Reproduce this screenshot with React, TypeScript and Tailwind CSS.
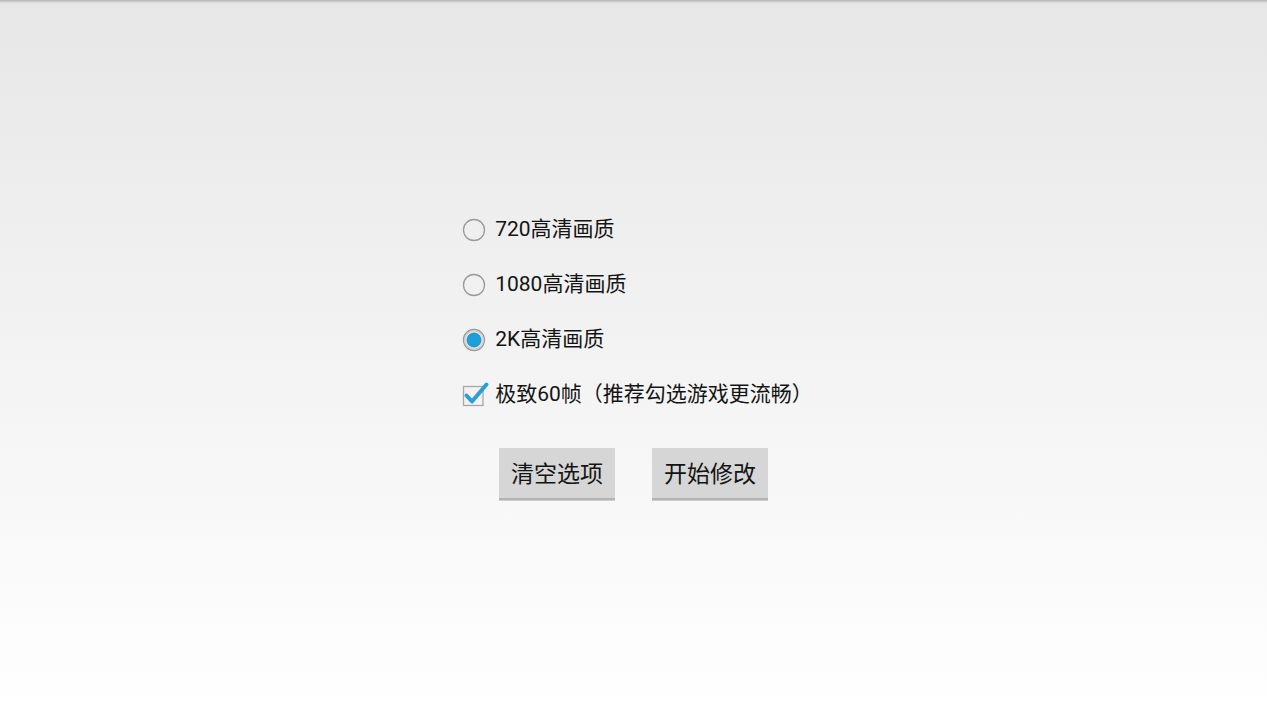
import React from "react";

const font = { fontFamily: 'Roboto, "Noto Sans CJK SC", sans-serif' };

function Radio({ checked }: { checked?: boolean }) {
  return (
    <svg width="24" height="24" viewBox="0 0 24 24" className="shrink-0">
      <circle cx="12" cy="12" r="10.5" fill={checked ? "#e8e8e8" : "none"} stroke="#9a9a9a" strokeWidth="1.3" />
      {checked && (
        <>
          <circle cx="12" cy="12" r="9.2" fill="none" stroke="#d0d0d0" strokeWidth="1.5" />
          <circle cx="12" cy="12" r="7" fill="#1ba0dc" />
          <circle cx="12" cy="12" r="7" fill="none" stroke="#1a86bd" strokeWidth="0.8" />
        </>
      )}
    </svg>
  );
}

function Check() {
  return (
    <svg width="24" height="26" viewBox="0 0 24 26" className="shrink-0 -mt-[4px] overflow-visible">
      <rect x="1.5" y="6.5" width="19.5" height="19" fill="#f2f2f2" stroke="#a8a8a8" strokeWidth="1.3" />
      <path d="M4.5 15.5 L10 21.5 L24.5 4.5" fill="none" stroke="#2a9fd6" strokeWidth="4" strokeLinecap="round" strokeLinejoin="round" />
    </svg>
  );
}

function Row({ children, icon }: { children: React.ReactNode; icon: React.ReactNode }) {
  return (
    <div className="h-[55px] flex items-center gap-[9px]">
      {icon}
      <span className="text-[21px] text-[#141414] leading-none">{children}</span>
    </div>
  );
}

function Btn({ children }: { children: React.ReactNode }) {
  return (
    <button className="w-[116px] h-[52px] bg-[#d6d6d6] border-b-2 border-[#b4b4b4] shadow-[0_1px_0_#cfcfcf] pt-[4px] text-[23px] text-[#141414] flex items-center justify-center">
      {children}
    </button>
  );
}

export default function App() {
  return (
    <div
      style={font}
      className="w-full h-[713px] overflow-hidden bg-gradient-to-b from-[#e7e7e7] to-[#ffffff] relative flex flex-col items-center pt-[202px]"
    >
      <div className="absolute top-0 left-0 right-0 h-[3px] bg-gradient-to-b from-[#b4b4b4] to-[#e2e2e2]" />
      <div className="flex flex-col items-start ml-[8px]">
        <Row icon={<Radio />}>720高清画质</Row>
        <Row icon={<Radio />}>1080高清画质</Row>
        <Row icon={<Radio checked />}>2K高清画质</Row>
        <Row icon={<Check />}>极致60帧（推荐勾选游戏更流畅）</Row>
      </div>
      <div className="flex gap-[37px] mt-[26px]">
        <Btn>清空选项</Btn>
        <Btn>开始修改</Btn>
      </div>
    </div>
  );
}
